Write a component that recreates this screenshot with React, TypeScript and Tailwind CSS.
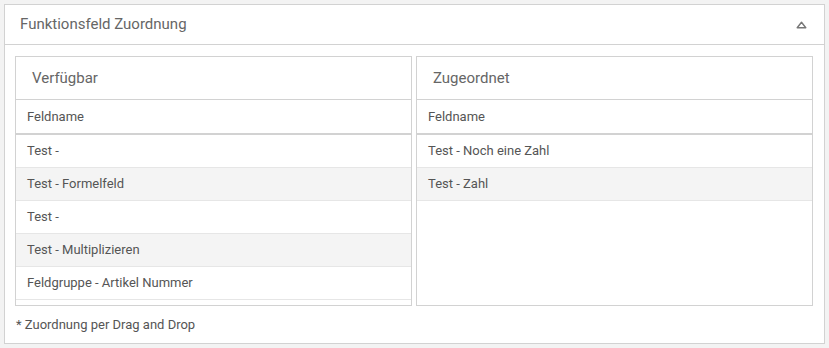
import React from 'react';

const available = [
  'Test -',
  'Test - Formelfeld',
  'Test -',
  'Test - Multiplizieren',
  'Feldgruppe - Artikel Nummer',
];

const assigned = ['Test - Noch eine Zahl', 'Test - Zahl'];

const FieldPanel: React.FC<{ title: string; items: string[] }> = ({ title, items }) => (
  <div className="flex-1 min-w-0 h-[250px] border border-[#d2d2d2] bg-white flex flex-col overflow-hidden">
    <div className="h-[43px] shrink-0 border-b border-[#d2d2d2] flex items-center pl-[16px] text-[15px] text-[#666]">
      {title}
    </div>
    <div className="h-[35px] shrink-0 border-b-2 border-[#d2d2d2] flex items-center pl-[11px] text-[13px] text-[#555]">
      Feldname
    </div>
    <div className="flex-1 overflow-hidden">
      {items.map((item, idx) => (
        <div
          key={idx}
          className={`h-[33px] border-b border-[#e6e6e6] flex items-center pl-[11px] text-[13px] text-[#555] ${
            idx % 2 === 1 ? 'bg-[#f4f4f4]' : 'bg-white'
          }`}
        >
          {item}
        </div>
      ))}
    </div>
  </div>
);

export default function App() {
  return (
    <div className="w-[829px] h-[348px] bg-[#f3f3f3] p-[4px] font-['Roboto',sans-serif]">
      <div className="w-[821px] h-[340px] bg-white border border-[#d2d2d2] flex flex-col">
        <div className="h-[40px] shrink-0 border-b border-[#d2d2d2] flex items-center justify-between pl-[15px] pr-[16px]">
          <span className="text-[15px] text-[#666]">Funktionsfeld Zuordnung</span>
          <svg width="11" height="8" viewBox="0 0 11 8" className="mr-[1px]">
            <path d="M5.5 1.2 L9.8 6.8 H1.2 Z" fill="none" stroke="#777" strokeWidth="1.4" strokeLinejoin="round" />
          </svg>
        </div>
        <div className="flex gap-[4px] pl-[10px] pr-[11px] pt-[11px]">
          <FieldPanel title="Verfügbar" items={available} />
          <FieldPanel title="Zugeordnet" items={assigned} />
        </div>
        <div className="flex-1 flex items-center pl-[11px] text-[13px] text-[#555]">
          * Zuordnung per Drag and Drop
        </div>
      </div>
    </div>
  );
}
